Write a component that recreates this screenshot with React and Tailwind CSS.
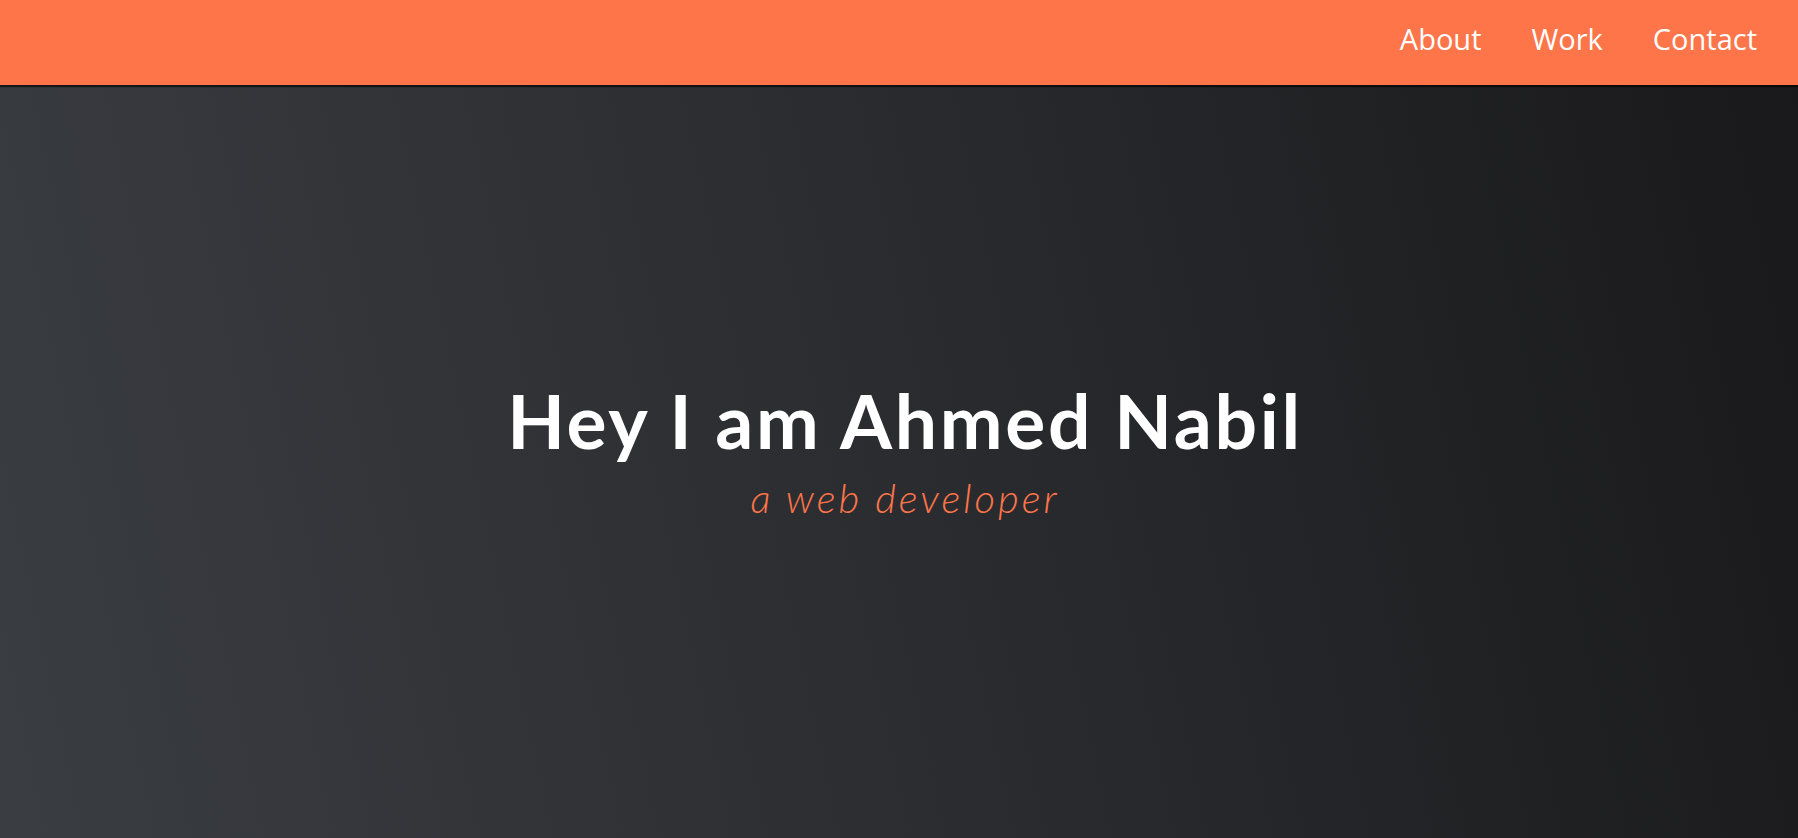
import React from 'react';

const links = ['About', 'Work', 'Contact'];

export default function App() {
  return (
    <div className="flex h-[838px] flex-col bg-[#1c1d1f]">
      <header className="relative z-10 flex h-[85px] shrink-0 items-center justify-end gap-[50px] bg-[#fd7549] pr-[41px] pb-[9px] shadow-[0_2px_1px_rgba(0,0,0,0.6)]">
        {links.map((l) => (
          <a
            key={l}
            href="#"
            className="font-['Open_Sans',sans-serif] text-[29px] font-normal leading-none text-white"
          >
            {l}
          </a>
        ))}
      </header>

      <main className="flex flex-1 flex-col items-center justify-center bg-[linear-gradient(78deg,#3a3d41_0%,#2b2c30_50%,#19191b_100%)] pb-[23px] pl-[12px]">
        <h1 className="font-['Lato',sans-serif] text-[75px] font-bold leading-none tracking-[2.7px] text-white">
          Hey I am Ahmed Nabil
        </h1>
        <p className="mt-[20px] font-['Lato',sans-serif] text-[40px] font-light italic leading-none tracking-[3px] text-[#fd7549]">
          a web developer
        </p>
      </main>
    </div>
  );
}
